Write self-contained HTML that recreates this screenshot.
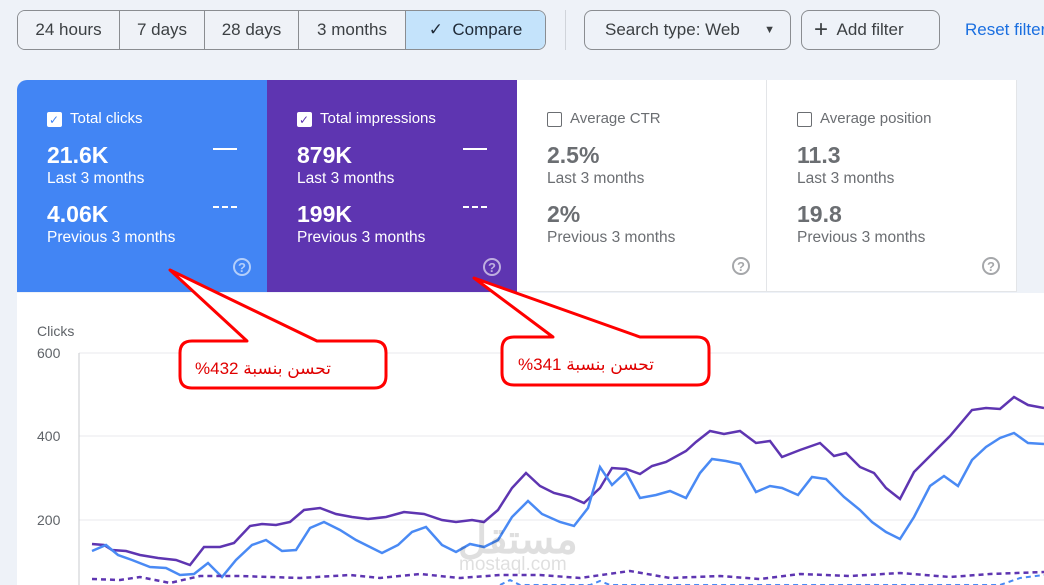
<!DOCTYPE html>
<html><head><meta charset="utf-8"><style>
body{margin:0;width:1044px;height:585px;overflow:hidden;background:#eef2f8;font-family:"Liberation Sans",Arial,sans-serif;position:relative}
.seg{position:absolute;top:10px;height:38px;display:flex;border:1px solid #8a8d91;border-radius:8px;overflow:hidden;left:17px}
.seg div{line-height:38px;font-size:17px;color:#3c4043;border-right:1px solid #8a8d91;background:#eff2f7;text-align:center;box-sizing:border-box}
.seg div:last-child{border-right:none;background:#c4e3fb;color:#1f2a37}
.btn{position:absolute;top:10px;line-height:38px;border:1px solid #8a8d91;border-radius:8px;font-size:17px;color:#3c4043;box-sizing:border-box;height:40px}
.card{position:absolute;top:80px;width:250px;height:212px;box-sizing:border-box;padding:30px 0 0 30px}
.card .t{font-size:15px;display:flex;align-items:center;gap:8px;line-height:18px}
.cb{width:15px;height:15px;border:1.5px solid currentColor;border-radius:2px;box-sizing:border-box;display:inline-block;position:relative}
.v{font-size:23px;font-weight:bold;margin-top:14px;line-height:26px}
.l{font-size:15.5px;line-height:22px}
.v2{margin-top:11px}
.q{position:absolute;right:16px;bottom:16px;width:18px;height:18px;border:2px solid currentColor;border-radius:50%;font-size:13px;text-align:center;line-height:15px;box-sizing:border-box;font-weight:bold;opacity:.6}
.dash{position:absolute;right:30px;width:24px;border-top:2px solid #fff}
</style></head><body>
<div class="seg"><div style="width:102px">24 hours</div><div style="width:85px">7 days</div><div style="width:94px">28 days</div><div style="width:107px">3 months</div><div style="width:139px">✓&nbsp;&nbsp;Compare</div></div>
<div style="position:absolute;left:565px;top:10px;width:1px;height:40px;background:#d0d4da"></div>
<div class="btn" style="left:584px;width:207px;padding-left:20px">Search type: Web<span style="position:absolute;right:15px;top:0;font-size:11px">▼</span></div>
<div class="btn" style="left:801px;width:139px;padding-left:12px"><span style="font-size:24px;font-weight:300;vertical-align:-2px">+</span>&nbsp; Add filter</div>
<div style="position:absolute;left:965px;top:20px;font-size:17px;color:#1a6fe0;white-space:nowrap">Reset filters</div>

<div class="card" style="left:17px;background:#4285f4;color:#fff;border-radius:10px 0 0 0">
<div class="t"><span class="cb" style="background:#fff;color:#fff"><span style="position:absolute;left:1px;top:-2px;color:#4285f4;font-size:12px">✓</span></span>Total clicks</div>
<div class="dash" style="top:68px"></div><div class="dash" style="top:126px;border-top-style:dashed"></div>
<div class="v">21.6K</div><div class="l">Last 3 months</div><div class="v v2">4.06K</div><div class="l">Previous 3 months</div><div class="q">?</div></div>
<div class="card" style="left:267px;background:#5e35b1;color:#fff">
<div class="t"><span class="cb" style="background:#fff;color:#fff"><span style="position:absolute;left:1px;top:-2px;color:#5e35b1;font-size:12px">✓</span></span>Total impressions</div>
<div class="dash" style="top:68px"></div><div class="dash" style="top:126px;border-top-style:dashed"></div>
<div class="v">879K</div><div class="l">Last 3 months</div><div class="v v2">199K</div><div class="l">Previous 3 months</div><div class="q">?</div></div>
<div class="card" style="left:517px;background:#fff;color:#6b6e72;border-right:1px solid #e3e5e8;border-bottom:1px solid #e3e5e8">
<div class="t"><span class="cb"></span>Average CTR</div>
<div class="v">2.5%</div><div class="l">Last 3 months</div><div class="v v2">2%</div><div class="l">Previous 3 months</div><div class="q">?</div></div>
<div class="card" style="left:767px;background:#fff;color:#6b6e72;border-right:1px solid #e3e5e8;border-bottom:1px solid #e3e5e8">
<div class="t"><span class="cb"></span>Average position</div>
<div class="v">11.3</div><div class="l">Last 3 months</div><div class="v v2">19.8</div><div class="l">Previous 3 months</div><div class="q">?</div></div>

<div style="position:absolute;left:17px;top:293px;width:1027px;height:292px;background:#fff"></div>
<svg style="position:absolute;left:0;top:0" width="1044" height="585">
<text x="37" y="336" font-size="14" fill="#5f6368" font-family="Liberation Sans">Clicks</text>
<g font-size="14" fill="#5f6368" font-family="Liberation Sans"><text x="37" y="358">600</text><text x="37" y="441">400</text><text x="37" y="525">200</text></g>
<g stroke="#e8eaed"><line x1="79" y1="353" x2="1044" y2="353"/><line x1="79" y1="436" x2="1044" y2="436"/><line x1="79" y1="520" x2="1044" y2="520"/></g>
<line x1="79" y1="353" x2="79" y2="585" stroke="#c8cbcf"/>
<polyline fill="none" stroke="#5e35b1" stroke-width="2.5" points="92,544 104,545 112,550 126,551 140,555 158,558 176,560 190,565 204,547 220,547 234,543 250,526 262,524 276,525 290,522 304,510 320,508 336,514 352,517 368,519 386,517 404,512 424,514 442,520 456,522 472,520 484,522 498,510 512,488 526,473 540,486 554,493 570,497 584,503 600,488 612,468 626,469 640,474 652,466 666,462 686,451 696,442 710,431 724,434 740,431 756,443 770,441 782,457 800,450 820,443 834,456 846,453 860,467 874,473 886,488 900,499 914,472 930,456 950,436 972,410 986,408 1000,409 1014,397 1028,405 1044,408"/>
<polyline fill="none" stroke="#4a8af4" stroke-width="2.5" points="92,551 106,545 118,555 132,560 150,567 166,568 180,575 194,574 208,563 222,577 236,560 252,545 266,540 282,551 296,550 310,528 324,522 340,530 356,540 372,548 382,553 398,545 412,532 426,527 442,545 456,552 470,544 484,547 498,540 512,517 528,501 542,514 560,522 574,526 588,508 600,467 612,485 626,472 640,498 656,495 670,491 686,498 700,473 712,459 726,461 740,464 756,492 770,486 782,488 798,495 812,477 826,479 844,497 860,510 872,522 886,532 900,539 914,517 930,486 944,476 958,486 972,460 986,447 1000,438 1014,433 1028,443 1044,444"/>
<polyline fill="none" stroke="#5e35b1" stroke-width="2.5" stroke-dasharray="5,4" points="92,579 120,580 140,577 170,583 200,576 240,576 300,578 350,575 380,578 420,574 460,578 500,575 540,575 580,578 630,571 670,578 720,576 760,579 800,574 850,576 900,573 950,577 990,574 1044,572"/>
<polyline fill="none" stroke="#4a8af4" stroke-width="2" stroke-dasharray="5,4" points="500,585 510,580 520,585 590,585 600,581 610,585 1000,585 1020,578 1044,575"/>
<g fill="#000" opacity=".12" font-family="Liberation Sans" font-weight="bold"><text x="458" y="553" font-size="40">مستقل</text><text x="459" y="570" font-size="19" font-weight="normal">mostaql.com</text></g>
<g fill="#fff" stroke="#f00" stroke-width="3" stroke-linejoin="round">
<path d="M192,341 H247 L170,270 L317,341 H374 Q386,341 386,353 V376 Q386,388 374,388 H192 Q180,388 180,376 V353 Q180,341 192,341 Z"/>
<path d="M514,337 H553 L474,278 L640,337 H697 Q709,337 709,349 V373 Q709,385 697,385 H514 Q502,385 502,373 V349 Q502,337 514,337 Z"/>
</g>
<g fill="#e00000" font-size="17" font-family="Liberation Sans,DejaVu Sans,sans-serif"><text x="195" y="374">%432 تحسن بنسبة</text><text x="518" y="370">%341 تحسن بنسبة</text></g>
</svg>
</body></html>
